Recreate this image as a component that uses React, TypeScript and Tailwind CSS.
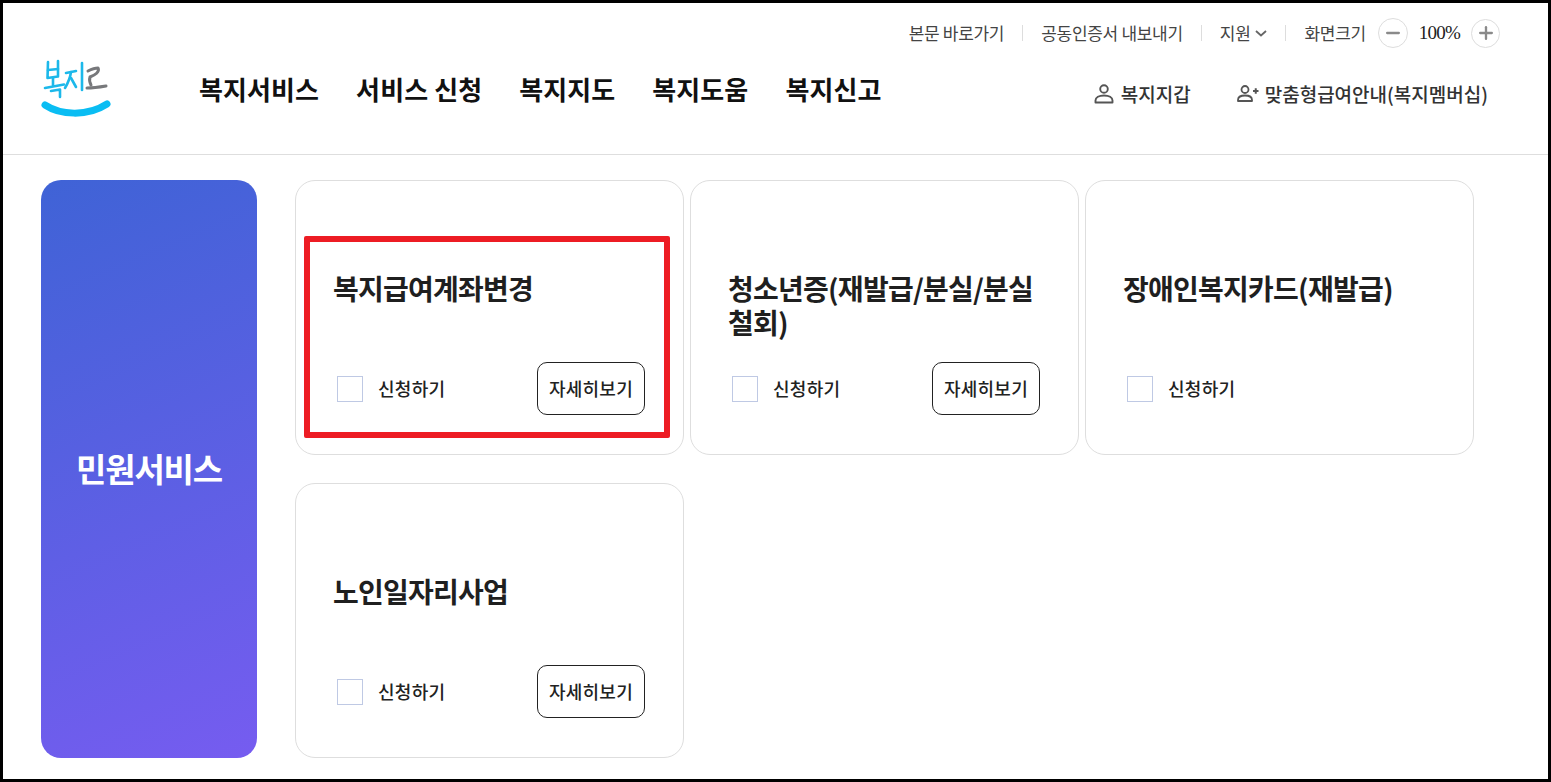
import { Minus, Plus } from 'lucide-react';

const FONT = "font-['Noto_Sans_CJK_KR',sans-serif]";

interface ServiceCardProps {
  title: string;
  detail?: boolean;
  highlight?: boolean;
}

function Logo() {
  return (
    <svg width="85" height="70" viewBox="0 0 85 70" fill="none" aria-label="복지로" className="shrink-0">
      <g stroke="#1cb8ea" strokeWidth="2.6" strokeLinecap="round" strokeLinejoin="round">
        <path d="M13 7 L12.5 23 L23 21.5 L23 6" />
        <path d="M13 15 L23 14" />
        <path d="M18 23 L18 30" />
        <path d="M10 33 L29 29.5" />
        <path d="M16 36 L25 34.5 L25 42" />
        <path d="M31 18 L41 16" />
        <path d="M36 17 C35 24 33 28 30 33" />
        <path d="M36 23 L41 32" />
        <path d="M47 8 L47 35" />
      </g>
      <path d="M53 16 C57 14 61 13 63 13 C65 17 60 20 55 22 C54 25 55 28 56 30" stroke="#77787b" strokeWidth="3" strokeLinecap="round" strokeLinejoin="round" />
      <path d="M52 33 C58 33 65 32 71 31" stroke="#77787b" strokeWidth="3" strokeLinecap="round" />
      <path d="M10 50 C25 60 52 62 72 49" stroke="#0abdf3" strokeWidth="7" strokeLinecap="round" />
    </svg>
  );
}

function WalletIcon() {
  return (
    <svg width="20" height="20" viewBox="0 0 20 20" fill="none" stroke="#555555" strokeWidth="1.9">
      <circle cx="10" cy="5" r="3.8" />
      <path d="M1.5 18.5 v-2 C1.5 13.5 5 11.5 10 11.5 S18.5 13.5 18.5 16.5 v2 Z" strokeLinejoin="round" />
    </svg>
  );
}

function MemberIcon() {
  return (
    <svg width="22" height="20" viewBox="0 0 22 20" fill="none" stroke="#555555" strokeWidth="1.8">
      <circle cx="8" cy="5.5" r="3.5" />
      <path d="M1 17 v-1 C1 13 4 11.5 8 11.5 S15 13 15 16 v1 Z" strokeLinejoin="round" />
      <path d="M16 7 h5.5 M18.75 4.2 v5.6" strokeWidth="2" />
    </svg>
  );
}

function Divider() {
  return <span className="h-[16px] w-px bg-[#dddddd]" />;
}

function ServiceCard({ title, detail = true, highlight }: ServiceCardProps) {
  return (
    <div className="relative flex h-[275px] flex-col justify-between rounded-[20px] border border-[#dedede] bg-white pb-[39px] pl-[37px] pr-[38px] pt-[90px]">
      <h3 className="text-[28px] font-bold leading-[34px] tracking-[-0.75px] text-[#1f1f1f]">{title}</h3>
      <div className="flex h-[53px] items-center justify-between">
        <label className="flex items-center pl-[4px]">
          <span className="h-[26px] w-[26px] border border-[#bfc9e4] bg-white" />
          <span className="ml-[15px] text-[18px] font-medium tracking-[0.3px] text-[#222222]">신청하기</span>
        </label>
        {detail && (
          <button className="flex h-[53px] w-[108px] items-center justify-center rounded-[10px] border border-[#222222] text-[18px] font-medium tracking-[0.2px] text-[#222222]">
            자세히보기
          </button>
        )}
      </div>
      {highlight && <div className="absolute left-[8px] top-[55px] h-[202px] w-[366px] rounded-[2px] border-[6px] border-[#ed1c24]" />}
    </div>
  );
}

export default function App() {
  return (
    <div className={`${FONT} flex h-[782px] w-[1551px] flex-col overflow-hidden border-[3px] border-black bg-white`}>
      <header className="h-[152px] shrink-0 border-b border-[#dedede]">
        <div className="flex h-[44px] items-center justify-end gap-[18px] pr-[48px] pt-[16px] text-[17px] tracking-[-0.3px] text-[#444444]">
          <span>본문 바로가기</span>
          <Divider />
          <span>공동인증서 내보내기</span>
          <Divider />
          <span className="flex items-center gap-[5px]">
            지원
            <svg width="12" height="7" viewBox="0 0 12 7" fill="none" stroke="#666666" strokeWidth="1.8">
              <path d="M1 1 L6 5.5 L11 1" />
            </svg>
          </span>
          <Divider />
          <div className="flex items-center">
            <span>화면크기</span>
            <span className="ml-[12px] flex h-[30px] w-[30px] items-center justify-center rounded-full border border-[#dddddd]">
              <Minus size={20} strokeWidth={2.8} className="text-[#8a8a8a]" />
            </span>
            <span className="ml-[11px] mr-[11px] font-['Liberation_Serif',serif] text-[19px] tracking-[-0.8px] text-[#222222]">100%</span>
            <span className="flex h-[29px] w-[29px] items-center justify-center rounded-full border border-[#dddddd]">
              <Plus size={20} strokeWidth={2.8} className="text-[#8a8a8a]" />
            </span>
          </div>
        </div>
        <div className="flex items-center pl-[32px] pr-[60px] pt-[8px]">
          <Logo />
          <nav className="ml-[79px] flex gap-[37px] pb-[4px] text-[26px] font-bold tracking-[0.1px] text-[#111111]">
            <span>복지서비스</span>
            <span>서비스 신청</span>
            <span>복지지도</span>
            <span>복지도움</span>
            <span>복지신고</span>
          </nav>
          <div className="ml-auto flex items-center gap-[46px] pt-[8px] text-[19px] font-medium text-[#333333]">
            <span className="flex items-center gap-[7px]">
              <WalletIcon />
              복지지갑
            </span>
            <span className="flex items-center gap-[6px]">
              <MemberIcon />
              맞춤형급여안내(복지멤버십)
            </span>
          </div>
        </div>
      </header>
      <main className="flex gap-[38px] pl-[38px] pt-[25px]">
        <aside className="flex h-[578px] w-[216px] shrink-0 items-center justify-center rounded-[20px] bg-[linear-gradient(157deg,#3f63d6,#765cf0)]">
          <h2 className="text-[33px] font-bold tracking-[-1.2px] text-white">민원서비스</h2>
        </aside>
        <div className="grid w-[1179px] grid-cols-[389px_389px_389px] content-start gap-x-[6px] gap-y-[28px]">
          <ServiceCard title="복지급여계좌변경" highlight />
          <ServiceCard title="청소년증(재발급/분실/분실철회)" />
          <ServiceCard title="장애인복지카드(재발급)" detail={false} />
          <ServiceCard title="노인일자리사업" />
        </div>
      </main>
    </div>
  );
}
